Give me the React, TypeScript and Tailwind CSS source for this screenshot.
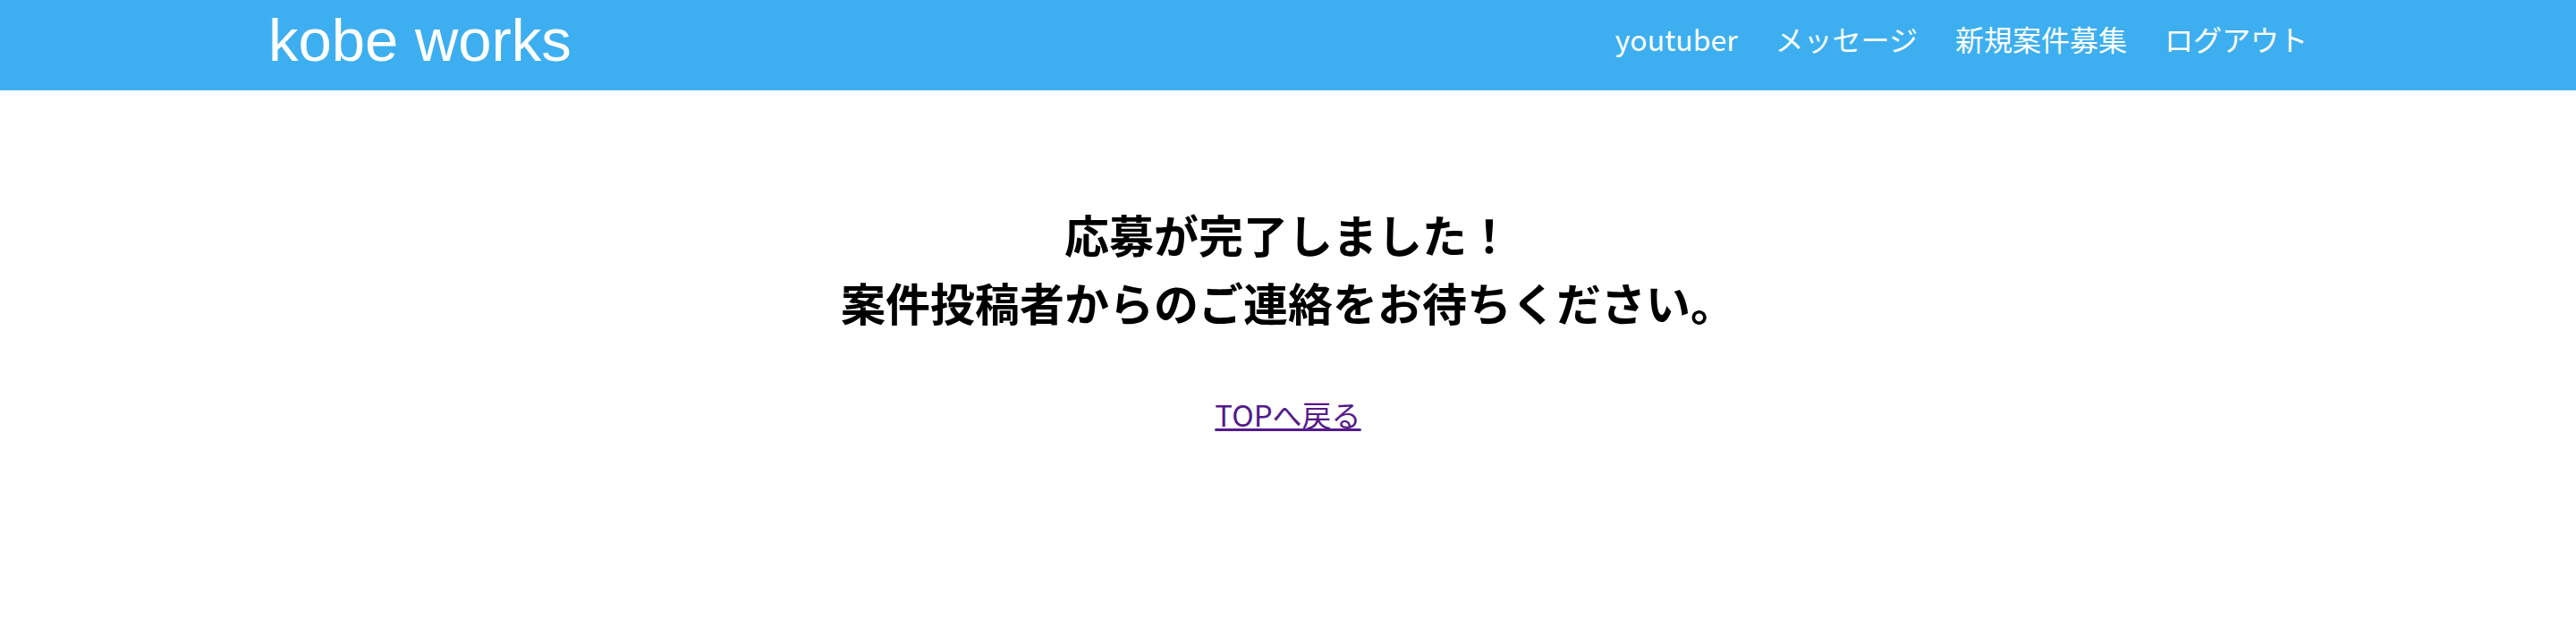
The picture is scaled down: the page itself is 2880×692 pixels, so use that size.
export default function App() {
  const font = { fontFamily: '"Noto Sans CJK JP", "Noto Sans", sans-serif' };

  return (
    <div className="min-h-screen bg-white" style={font}>
      <header className="h-[101px] bg-[#3daff0]">
        <div className="max-w-[2280px] mx-auto h-full flex items-center justify-between">
          <a className="text-white text-[67px] leading-none font-['Liberation_Sans',sans-serif] -mt-[12px]">kobe works</a>
          <nav className="flex items-center gap-[42px] text-white text-[32px] -mt-[16px]">
            <a>youtuber</a>
            <a>メッセージ</a>
            <a>新規案件募集</a>
            <a>ログアウト</a>
          </nav>
        </div>
      </header>
      <main className="flex flex-col items-center pt-[122px]">
        <h1 className="text-[50px] font-bold text-black text-center leading-[76px]">
          応募が完了しました！
          <br />
          案件投稿者からのご連絡をお待ちください。
        </h1>
        <a href="#" className="mt-[64px] text-[33px] text-[#551a8b] underline">
          TOPへ戻る
        </a>
      </main>
    </div>
  );
}
